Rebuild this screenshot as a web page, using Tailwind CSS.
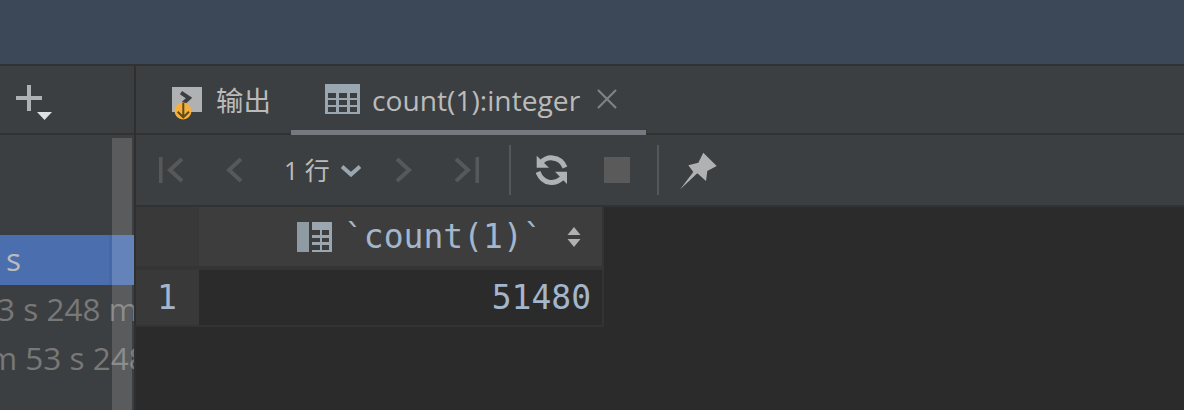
<!DOCTYPE html>
<html>
<head>
<meta charset="utf-8">
<script src="https://cdn.jsdelivr.net/npm/@tailwindcss/browser@4"></script>
</head>
<body class="w-[1184px] h-[410px] overflow-hidden bg-[#2b2b2b] font-['Open_Sans','Noto_Sans_CJK_SC',sans-serif]">
<div class="h-[64px] bg-[#3c4858]"></div>
<div class="flex h-[346px] border-t-2 border-[#323232]">
  <!-- left panel -->
  <aside class="relative w-[134px] shrink-0 bg-[#3c3f41] overflow-hidden">
    <div class="relative h-[69px] border-b-2 border-[#323232]">
      <svg class="absolute left-[16px] top-[19px]" width="36" height="36" viewBox="0 0 36 36">
        <path d="M11 0h4v11h11v4H15v11h-4V15H0v-4h11z" fill="#afb1b3"/>
        <path d="M21 27h15l-7.500 8z" fill="#dfe1e3"/>
      </svg>
    </div>
    <div class="pt-[100px] text-[31.500px] leading-[47px] whitespace-nowrap text-[#787878]">
      <div class="h-[50px] bg-[#4b6eaf] pl-[6px] text-[#bbbbbb]">s</div>
      <div class="h-[49px] -ml-[3px]">3 s 248 m</div>
      <div class="-ml-[12px]">m 53 s 248</div>
    </div>
    <div class="absolute left-[112px] top-[72px] bottom-0 w-[20px] bg-[#ffffff]/15"></div>
    <div class="absolute left-[132px] top-[169px] h-[50px] w-[2px] bg-[#ffffff]/15"></div>
    <div class="absolute left-[109px] top-[169px] h-[50px] w-[3px] bg-[#000000]/5"></div>
  </aside>
  <div class="w-[2px] shrink-0 bg-[#2f2f2f]"></div>
  <!-- right panel -->
  <main class="flex-1 min-w-0 flex flex-col">
    <div class="flex h-[69px] bg-[#3c3f41] border-b-2 border-[#323232] text-[#bbbbbb] text-[28.200px]">
      <div class="flex items-center w-[155px] pl-[36px] gap-[13px] pb-[2px]">
        <svg width="32" height="43" viewBox="0 0 32 43" class="shrink-0">
          <rect x="0" y="10" width="30" height="25" fill="#afb1b3"/>
          <path d="M9 15.700l8 5.300-5.700 5.300" fill="none" stroke="#3c3f41" stroke-width="4"/>
          <circle cx="11" cy="34" r="8.500" fill="#f4af3d"/>
          <path d="M11.300 26v14M5.700 34.700l5.600 5.600 5.700-5.600" fill="none" stroke="#5e4c1d" stroke-width="2"/>
        </svg>
        <span class="leading-none mt-[4px] -ml-[1px] text-[27.500px]">输出</span>
      </div>
      <div class="relative flex items-center w-[355px] pl-[34px] gap-[11px] pb-[2px]">
        <svg width="36" height="30" viewBox="0 0 36 30" class="shrink-0">
          <path d="M0 0h35v30H0z" fill="#9aa7b0"/>
          <path d="M3 9h8v5H3zM14 9h8v5h-8zM25 9h7v5h-7zM3 16h8v5H3zM14 16h8v5h-8zM25 16h7v5h-7zM3 23h8v5H3zM14 23h8v5h-8zM25 23h7v5h-7z" fill="#3c3f41"/>
        </svg>
        <span class="leading-none whitespace-nowrap mt-[4px]">count(1):integer</span>
        <svg width="20" height="20" viewBox="0 0 20 20" class="ml-[6px] shrink-0"><path d="M1 1l18 18M19 1L1 19" stroke="#7f8284" stroke-width="2.200"/></svg>
        <div class="absolute left-0 right-0 bottom-[-2px] h-[5px] bg-[#747a80]"></div>
      </div>
    </div>
    <div class="flex items-center h-[72px] bg-[#3c3f41] border-b-2 border-[#323232] text-[#bbbbbb]">
      <svg class="ml-[23px] shrink-0" width="24" height="26" viewBox="0 0 24 26" fill="none" stroke="#56585a" stroke-width="4"><path d="M1.500 0v26"/><path d="M23 2L11 13l12 11"/></svg>
      <svg class="ml-[43px] shrink-0" width="16" height="26" viewBox="0 0 16 26" fill="none" stroke="#56585a" stroke-width="4"><path d="M15 2L3 13l12 11"/></svg>
      <span class="ml-[42px] text-[25px] leading-none whitespace-nowrap">1 行</span>
      <svg class="ml-[11px] mt-[2px] shrink-0" width="20" height="12" viewBox="0 0 20 12" fill="none" stroke="#9aa7b0" stroke-width="4"><path d="M1 1.500l9 8 9-8"/></svg>
      <svg class="ml-[35px] shrink-0" width="16" height="26" viewBox="0 0 16 26" fill="none" stroke="#56585a" stroke-width="4"><path d="M1 2l12 11L1 24"/></svg>
      <svg class="ml-[43px] shrink-0" width="24" height="26" viewBox="0 0 24 26" fill="none" stroke="#56585a" stroke-width="4"><path d="M1 2l12 11L1 24"/><path d="M22.500 0v26"/></svg>
      <div class="ml-[30px] w-[2px] h-[50px] bg-[#55585a] shrink-0"></div>
      <svg class="ml-[25px] shrink-0" width="32" height="30" viewBox="0 0 32 30" fill="none" stroke="#afb1b3" stroke-width="5"><path d="M5 8C9 1 24 0 29 12.500"/><path d="M2 17C7 30 20 30 27 22"/><path d="M.7.7v12H13z" fill="#afb1b3" stroke="none"/><path d="M31 16.700V29L19 16.700z" fill="#afb1b3" stroke="none"/></svg>
      <div class="ml-[36px] w-[26px] h-[26px] bg-[#5a5a5a] shrink-0"></div>
      <div class="ml-[27px] w-[2px] h-[50px] bg-[#55585a] shrink-0"></div>
      <svg class="ml-[20px] mt-[2px] shrink-0" width="38" height="38" viewBox="0 0 38 38"><path d="M24.300.7L37.700 14l-9.400 5L27 29l-8.700-7.700L1 37.500 14.300 20l-5-6.700 10-2.600z" fill="#afb1b3"/></svg>
    </div>
    <!-- table -->
    <div class="flex-1 bg-[#2b2b2b] font-['DejaVu_Sans_Mono',monospace] text-[33px] leading-none">
      <div class="flex w-[468px] h-[63px] border-b-4 border-[#333536]">
        <div class="w-[63px] bg-[#393939]"></div>
        <div class="flex-1 bg-[#3d3d3d] flex items-center pl-[98px] border-r-2 border-[#333333]">
          <svg width="36" height="30" viewBox="0 0 36 30" class="shrink-0"><path d="M0 0h12v30H0z" fill="#8f9ba3"/><path d="M15 0h20v30H15z" fill="#9aa7b0"/><path d="M15 8h8v5h-8zM25 8h7v5h-7zM15 16h8v4h-8zM25 16h7v4h-7zM15 23h8v5h-8zM25 23h7v5h-7z" fill="#3d3d3d"/></svg>
          <span class="ml-[11px] text-[#a3b6cc] whitespace-nowrap">`count(1)`</span>
          <svg class="ml-[24px] shrink-0" width="14" height="20" viewBox="0 0 14 20"><path d="M7 0l6.500 8H.5zM.5 12h13L7 20z" fill="#afb1b3"/></svg>
        </div>
      </div>
      <div class="flex w-[468px] h-[57px] border-b-2 border-[#333333]">
        <div class="w-[63px] bg-[#393939] text-[#a3b6cc] flex items-center pl-[21px]">1</div>
        <div class="flex-1 bg-[#2b2b2b] border-r-2 border-[#333333] flex items-center justify-end pr-[11px] text-[#a3b6cc]">51480</div>
      </div>
    </div>
  </main>
</div>
</body>
</html>
